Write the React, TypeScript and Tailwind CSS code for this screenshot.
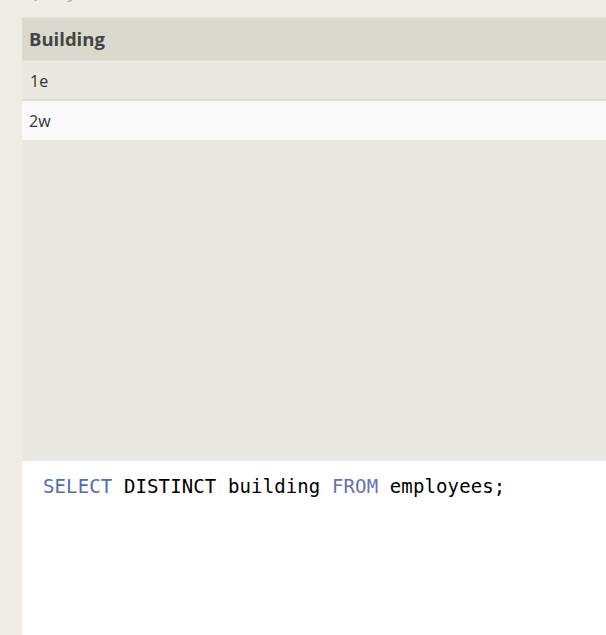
export default function App() {
  return (
    <div
      className="w-[606px] h-[635px] overflow-hidden bg-[#efece5] pl-[22px] flex flex-col"
      style={{ fontFamily: '"Open Sans", "Noto Sans", sans-serif' }}
    >
      {/* heading, mostly scrolled off the top */}
      <div className="h-[17px] relative">
        <div className="absolute left-[3px] top-[-21px] text-[18px] leading-[24px] text-[#b3b0a8]">
          Query Results
        </div>
      </div>

      <div className="flex-1 flex flex-col border-t border-[#e3e1da]">
        <div className="h-[43px] bg-[#dad9ce] border-b border-[#e3e2dc] flex items-center pl-[7px]">
          <span className="text-[18.5px] font-bold text-[#444]">Building</span>
        </div>
        <div className="h-[40px] bg-[#e9e8e1] border-b-2 border-[#dedcd6] flex items-center pl-[8px] pt-[1px]">
          <span className="text-[16px] text-[#333]">1e</span>
        </div>
        <div className="h-[39px] bg-[#f9f9f9] flex items-center pl-[7px] pt-[1px]">
          <span className="text-[16px] text-[#333]">2w</span>
        </div>
        <div className="h-[321px] bg-[#e9e8e1]" />

        <div
          className="flex-1 bg-white pl-[21px] pt-[13px] text-[19px] leading-[24px] tracking-[0.12px] text-black"
          style={{ fontFamily: '"DejaVu Sans Mono", "Liberation Mono", monospace' }}
        >
          <span className="text-[#4f6db3]">SELECT</span> DISTINCT building{' '}
          <span className="text-[#6670b2]">FROM</span> employees;
        </div>
      </div>
    </div>
  )
}
